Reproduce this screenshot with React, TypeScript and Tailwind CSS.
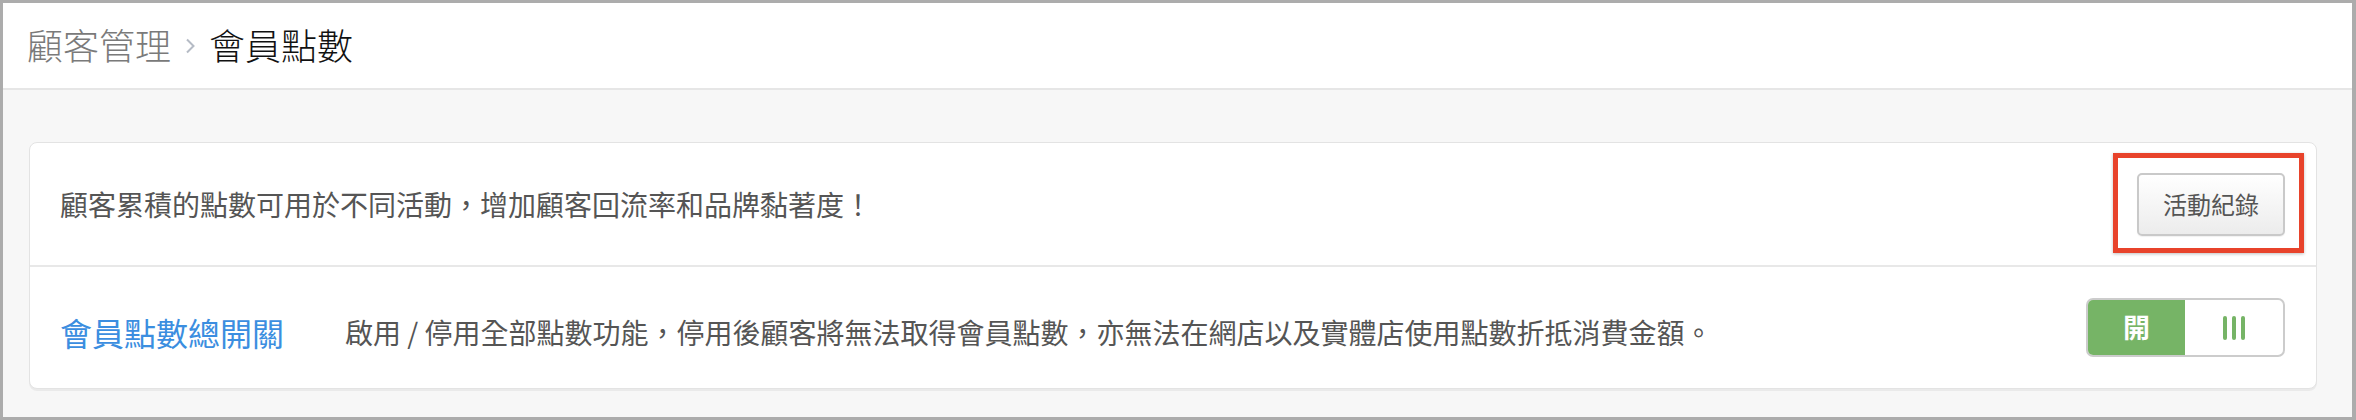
import React from 'react';

const FONT = "font-['Noto_Sans_CJK_TC','Noto_Sans',sans-serif]";

function Chevron() {
  return (
    <svg width="14" height="18" viewBox="0 0 14 18" className="mx-[12px] mt-[4px]">
      <path d="M4 2.5 L10.5 9 L4 15.5" fill="none" stroke="#b5bbc5" strokeWidth="2" />
    </svg>
  );
}

function OnOffSwitch() {
  return (
    <div className="flex h-[59px] w-[199px] overflow-hidden rounded-[7px] border-2 border-[#cccccc] bg-white">
      <div className="flex w-[97px] items-center justify-center bg-[#76b466] text-[27px] font-bold text-white">
        開
      </div>
      <div className="flex flex-1 items-center justify-center gap-[5px]">
        <span className="h-[24px] w-[4px] rounded-[2px] bg-[#76b466]" />
        <span className="h-[24px] w-[4px] rounded-[2px] bg-[#76b466]" />
        <span className="h-[24px] w-[4px] rounded-[2px] bg-[#76b466]" />
      </div>
    </div>
  );
}

export default function App() {
  return (
    <div className={`${FONT} flex h-[420px] w-full flex-col border-t-[3px] border-b-[3px] border-l-[3px] border-r-[4px] border-[#acacac] bg-[#f7f7f7]`}>
      {/* Breadcrumb header */}
      <div className="flex h-[87px] shrink-0 items-center border-b-2 border-[#e6e6e6] bg-white pb-[4px] pl-[24px]">
        <span className="text-[36px] font-light leading-none text-[#7a7a7a]">顧客管理</span>
        <Chevron />
        <span className="text-[36px] font-light leading-none text-[#111111]">會員點數</span>
      </div>

      {/* Content */}
      <div className="pl-[26px] pr-[35px] pt-[52px]">
        <div className="rounded-[8px] border border-[#e3e3e3] bg-white shadow-[0_2px_0_rgba(0,0,0,0.05)]">
          {/* Intro row */}
          <div className="flex h-[124px] items-center justify-between border-b-2 border-[#e8e8e8] pl-[30px] pr-[31px]">
            <p className="text-[28px] leading-none text-[#555555]">
              顧客累積的點數可用於不同活動，增加顧客回流率和品牌黏著度！
            </p>
            <div className="relative">
              <button className="h-[63px] w-[148px] rounded-[5px] border-2 border-[#c9c9c9] bg-gradient-to-b from-white to-[#ececec] text-[24px] text-[#555555] shadow-[0_1px_1px_rgba(0,0,0,0.06)]">
                活動紀錄
              </button>
              {/* annotation highlight */}
              <div className="pointer-events-none absolute -top-[20px] -bottom-[17px] -left-[24px] -right-[19px] border-[5px] border-[#e8432b] shadow-[0_1px_3px_rgba(0,0,0,0.25)]" />
            </div>
          </div>

          {/* Master switch row */}
          <div className="flex h-[121px] items-center pl-[30px] pr-[31px]">
            <div className="w-[285px] shrink-0 pt-[8px] text-[32px] leading-none text-[#3b8ee0]">會員點數總開關</div>
            <p className="flex-1 pt-[8px] text-[28px] leading-none text-[#555555]">
              啟用 / 停用全部點數功能，停用後顧客將無法取得會員點數，亦無法在網店以及實體店使用點數折抵消費金額。
            </p>
            <OnOffSwitch />
          </div>
        </div>
      </div>
    </div>
  );
}
